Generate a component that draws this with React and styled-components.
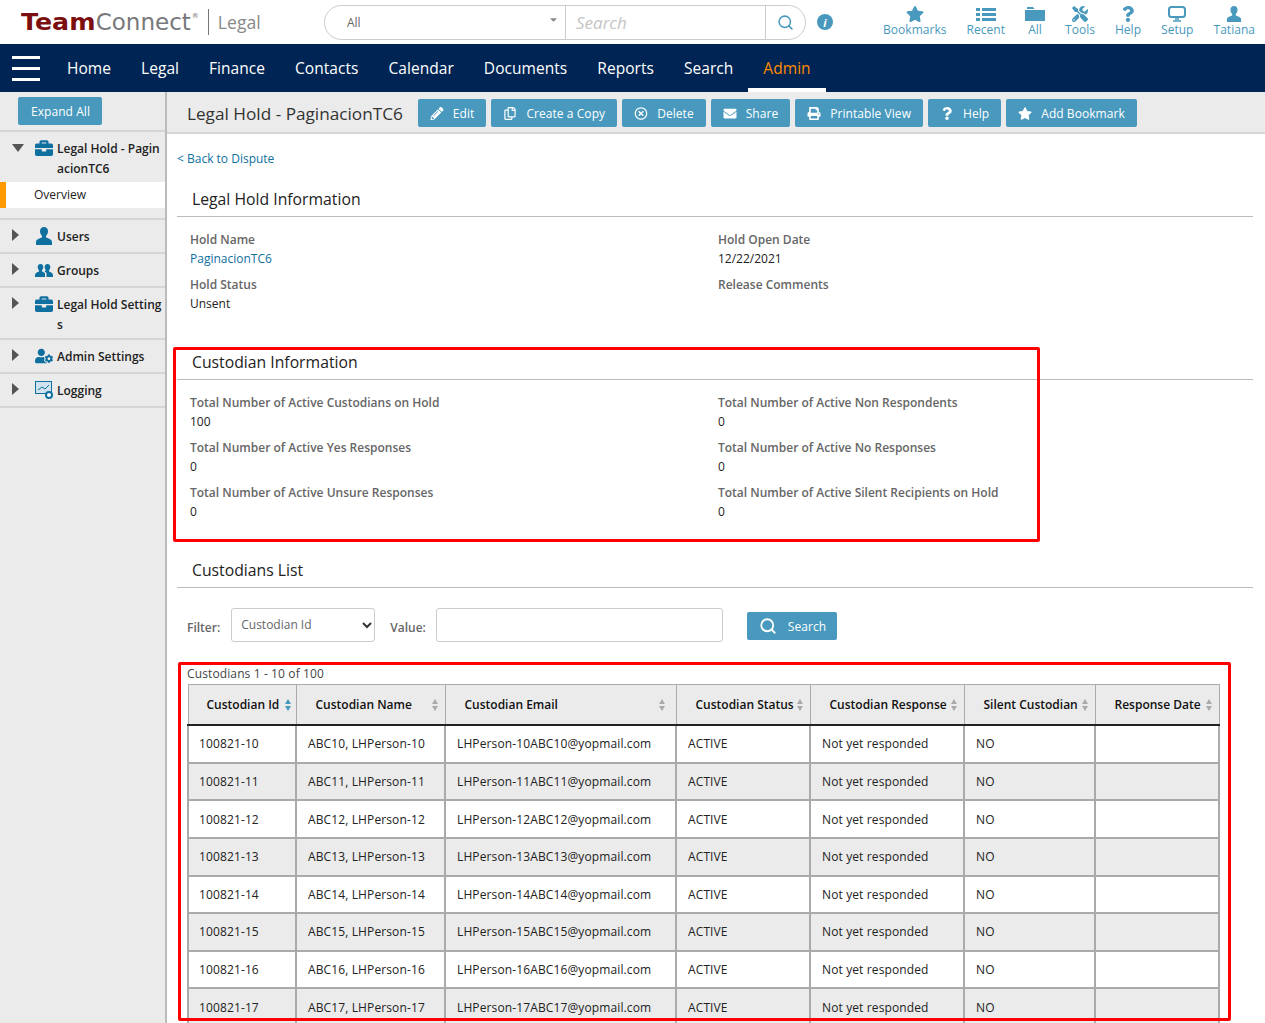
import React from "react";
import styled, { createGlobalStyle } from "styled-components";
import {
  FaStar,
  FaTools,
  FaQuestion,
  FaPencilAlt,
  FaRegCopy,
  FaRegTimesCircle,
  FaEnvelope,
  FaPrint,
  FaBriefcase,
  FaUserCog,
  FaCaretDown,
} from "react-icons/fa";
import { Search as SearchGlyph } from "lucide-react";

const BLUE = "#4899bd";
const ICON_BLUE = "#0f6f9f";
const NAVY = "#002554";

const GlobalStyle = createGlobalStyle`
  html, body {
    margin: 0;
    padding: 0;
    height: 100%;
    overflow: hidden;
    background: #fff;
    font-family: "Open Sans", "Noto Sans", sans-serif;
    font-size: 12px;
    color: #222;
  }
`;

const Page = styled.div`
  position: relative;
  width: 1265px;
  height: 1023px;
  overflow: hidden;
`;

const Header = styled.header`
  display: flex;
  align-items: center;
  height: 44px;
  padding-left: 21px;
  background: #fff;
`;

const Logo = styled.div`
  display: flex;
  align-items: center;
  width: 303px;
  flex: none;
`;

const LogoWord = styled.span`
  font-family: "DejaVu Sans", sans-serif;
  font-size: 23px;
  color: #77787b;
  font-weight: 400;
  b {
    display: inline-block;
    margin-right: 7px;
    color: #7b0f0f;
    font-weight: 700;
    transform: scaleX(1.1);
    transform-origin: left center;
  }
  sup {
    font-size: 7px;
    vertical-align: 12px;
    line-height: 0;
    margin-left: 1px;
  }
`;

const LogoLabel = styled.span`
  margin-left: 9px;
  padding-left: 9px;
  border-left: 1px solid #777;
  height: 26px;
  line-height: 26px;
  font-size: 17.6px;
  color: #888;
`;

const SearchBox = styled.div`
  display: flex;
  width: 482px;
  height: 35px;
  box-sizing: border-box;
  border: 1px solid #ccc;
  border-radius: 18px;
  flex: none;
  margin-top: 1px;
`;

const ScopeSelect = styled.div`
  position: relative;
  display: flex;
  align-items: center;
  width: 241px;
  padding-left: 22px;
  box-sizing: border-box;
  color: #666;
  border-right: 1px solid #ccc;
  svg {
    position: absolute;
    right: 6px;
    top: 8px;
    color: #888;
    font-size: 11px;
  }
`;

const SearchField = styled.div`
  display: flex;
  align-items: center;
  width: 200px;
  padding-left: 10px;
  box-sizing: border-box;
  font-size: 17px;
  font-style: italic;
  color: #c4c4c4;
  border-right: 1px solid #ccc;
`;

const SearchIconCell = styled.div`
  flex: 1;
  display: flex;
  align-items: center;
  padding-left: 11px;
  color: ${BLUE};
`;

const InfoDot = styled.div`
  display: flex;
  align-items: center;
  justify-content: center;
  width: 16px;
  height: 16px;
  margin-left: 11px;
  border-radius: 50%;
  background: ${BLUE};
  color: #fff;
  font-size: 11px;
  font-weight: 700;
  font-style: italic;
`;

const QuickLinks = styled.nav`
  display: flex;
  align-self: flex-start;
  margin-left: auto;
  padding: 6px 10px 0 0;
  gap: 20px;
`;

const QuickLink = styled.div`
  display: flex;
  flex-direction: column;
  align-items: center;
  color: ${BLUE};
  line-height: 15px;
  letter-spacing: 0.03px;
  svg {
    width: 20px;
    height: 16px;
  }
`;

const NavBar = styled.nav`
  display: flex;
  align-items: center;
  height: 48px;
  background: ${NAVY};
`;

const Burger = styled.div`
  display: flex;
  flex-direction: column;
  justify-content: space-between;
  width: 28px;
  height: 25px;
  margin-left: 12px;
  margin-right: 12px;
  span {
    height: 3px;
    background: #fff;
  }
`;

const NavItem = styled.div`
  position: relative;
  display: flex;
  align-items: center;
  height: 100%;
  padding: 0 15px;
  font-size: 15.5px;
  letter-spacing: 0.05px;
  color: ${(p) => (p.$active ? "#ff8a00" : "#fff")};
  &::after {
    content: "";
    display: ${(p) => (p.$active ? "block" : "none")};
    position: absolute;
    left: 0;
    right: 0;
    bottom: 0;
    height: 4px;
    background: #fff;
  }
`;

const Body = styled.div`
  display: flex;
  height: 931px;
`;

const Sidebar = styled.aside`
  width: 165px;
  flex: none;
  background: #ebebeb;
  border-right: 2px solid #bbb;
`;

const ExpandRow = styled.div`
  height: 40px;
  padding: 5px 0 0 18px;
  box-sizing: border-box;
  border-bottom: 2px solid #d6d6d6;
`;

const SmallButton = styled.button`
  display: inline-flex;
  align-items: center;
  height: 28px;
  padding: 0 12px 0 ${(p) => p.$pad || 12}px;
  border: 0;
  border-radius: 2px;
  background: ${BLUE};
  color: #fff;
  font-family: inherit;
  font-size: 12px;
  letter-spacing: 0.06px;
  svg {
    width: 14px;
    height: 13px;
    margin-right: 9px;
  }
`;

const TreeItem = styled.div`
  display: grid;
  grid-template-columns: 35px 22px 1fr;
  padding: 7px 0 ${(p) => (p.$wrapped ? 3 : 5)}px;
  border-bottom: 2px solid #d6d6d6;
  font-weight: 600;
  line-height: 20px;
  color: #222;
`;

const TreeArrow = styled.svg`
  margin: ${(p) => p.$top}px 0 0 12px;
  fill: #555;
`;

const TreeIcon = styled.div`
  color: ${ICON_BLUE};
  line-height: 20px;
  svg {
    width: 18px;
    height: 18px;
    vertical-align: top;
  }
`;

const TreeLabel = styled.div`
  word-break: break-all;
`;

const OpenGroup = styled.div`
  border-bottom: 2px solid #d6d6d6;
  padding-bottom: 10px;
`;

const OpenHead = styled(TreeItem)`
  border-bottom: 0;
  padding: 7px 0 3px;
`;

const OverviewRow = styled.div`
  height: 26px;
  line-height: 26px;
  padding-left: 28px;
  background: #fff;
  border-left: 6px solid #ff9a00;
`;

const Main = styled.main`
  flex: 1;
  min-width: 0;
`;

const Toolbar = styled.div`
  display: flex;
  align-items: center;
  height: 42px;
  box-sizing: border-box;
  padding: 0 0 0 20px;
  background: #ebebeb;
  border-bottom: 2px solid #d6d6d6;
`;

const PageTitle = styled.h1`
  margin: 2px 15px 0 0;
  font-size: 17.2px;
  font-weight: 400;
  color: #333;
`;

const ToolGroup = styled.div`
  display: flex;
  gap: 5px;
  margin-top: 2px;
`;

const Content = styled.div`
  position: relative;
  padding: 16px 12px 0 10px;
`;

const BackLink = styled.a`
  display: block;
  color: ${ICON_BLUE};
  line-height: 17px;
`;

const SectionTitle = styled.h2`
  margin: ${(p) => p.$top}px 0 0;
  padding: 0 0 5px 15px;
  font-size: 15.75px;
  font-weight: 400;
  line-height: 24px;
  color: #222;
  border-bottom: 1px solid #bbb;
`;

const InfoGrid = styled.dl`
  display: grid;
  grid-template-columns: 528px 1fr;
  margin: 14px 0 0 13px;
`;

const Field = styled.div`
  height: 45.3px;
`;

const FieldLabel = styled.dt`
  font-weight: 600;
  color: #666;
  line-height: 18px;
`;

const FieldValue = styled.dd`
  margin: 1px 0 0;
  line-height: 18px;
  color: ${(p) => (p.$link ? ICON_BLUE : "#222")};
`;

const FilterRow = styled.div`
  display: flex;
  align-items: center;
  height: 34px;
  margin: 20px 0 0 10px;
`;

const FilterLabel = styled.label`
  font-weight: 600;
  color: #666;
  margin: 4px ${(p) => p.$after}px 0 0;
`;

const FilterSelect = styled.div`
  position: relative;
  width: 144px;
  height: 34px;
  box-sizing: border-box;
  margin-right: 15px;
  padding: 8px 9px;
  border: 1px solid #ccc;
  border-radius: 3px;
  color: #666;
  line-height: 16px;
`;

const Chevron = styled.svg`
  position: absolute;
  right: 2px;
  top: 13px;
`;

const FilterInput = styled.div`
  width: 287px;
  height: 34px;
  box-sizing: border-box;
  margin-right: 24px;
  border: 1px solid #ccc;
  border-radius: 3px;
`;

const FilterButton = styled(SmallButton)`
  margin-top: 2px;
  padding: 0 11px 0 12px;
  svg {
    width: 18px;
    height: 18px;
    margin-right: 11px;
  }
`;

const ListCaption = styled.div`
  margin: 22px 0 0 10px;
  line-height: 20px;
  letter-spacing: 0.12px;
  color: #444;
`;

const Table = styled.table`
  width: 1032px;
  margin-left: 10px;
  border-collapse: collapse;
  table-layout: fixed;
  font-size: 12px;
`;

const SortMark = styled.svg`
  position: absolute;
  right: 7px;
  top: 14px;
`;

const HeadCell = styled.th`
  position: relative;
  height: 38.4px;
  padding: 0 0 0 19px;
  text-align: left;
  font-weight: 600;
  color: #111;
  background: #ebebeb;
  border: 1px solid #aaa;
  border-bottom: 2px solid #222;
  &:first-child {
    padding-left: 18px;
  }
  &:first-child ${SortMark} {
    right: 5px;
  }
  &:nth-child(3) ${SortMark} {
    right: 11px;
  }
`;

const BodyRow = styled.tr`
  background: ${(p) => (p.$alt ? "#ebebeb" : "#fff")};
`;

const BodyCell = styled.td`
  height: 35.67px;
  padding: 0 0 0 11px;
  color: #222;
  letter-spacing: 0.12px;
  border: 2px solid #aaa;
  white-space: nowrap;
  &:first-child {
    padding-left: 10px;
  }
`;

const RedFrame = styled.div`
  position: absolute;
  left: ${(p) => p.$x}px;
  top: ${(p) => p.$y}px;
  width: ${(p) => p.$w}px;
  height: ${(p) => p.$h}px;
  box-sizing: border-box;
  border: 3px solid #f00;
  border-radius: 2px;
  pointer-events: none;
`;

const RecentIcon = () => (
  <svg viewBox="0 0 20 16" fill="currentColor">
    <rect x="0" y="2" width="4" height="3" />
    <rect x="6" y="2" width="14" height="3" />
    <rect x="0" y="7" width="4" height="3" />
    <rect x="6" y="7" width="14" height="3" />
    <rect x="0" y="12" width="4" height="3" />
    <rect x="6" y="12" width="14" height="3" />
  </svg>
);

const FolderIcon = () => (
  <svg viewBox="0 0 20 16" fill="currentColor">
    <path d="M2 1h6l1.5 2H2z" />
    <path d="M0 4h20v11H0z" />
  </svg>
);

const MonitorIcon = () => (
  <svg viewBox="0 0 20 16" fill="none" stroke="currentColor">
    <rect x="2" y="1" width="16" height="10" rx="2.5" strokeWidth="2" />
    <path d="M8 13h4M6 15h8" strokeWidth="1.6" />
  </svg>
);

const PersonIcon = () => (
  <svg viewBox="0 0 18 18" fill="currentColor">
    <path d="M9 0c2.5 0 4 1.8 4 4.2 0 2-1 3.6-2 4.8v1.6c2.6.9 6 1.9 6 4.4V18H1v-3c0-2.5 3.4-3.5 6-4.4V9C6 7.800 5 6.200 5 4.200 5 1.800 6.500 0 9 0z" />
  </svg>
);

const GroupIcon = () => (
  <svg viewBox="0 0 18 18" fill="currentColor">
    <path d="M5.500 3c1.700 0 2.800 1.300 2.800 3 0 1.400-.6 2.500-1.300 3.300v1.200c1.300.5 2.300 1 3 1.800V16H0v-2c0-1.700 2.400-2.700 4-3.400V9.300C3.300 8.500 2.700 7.400 2.700 6c0-1.700 1.100-3 2.800-3z" />
    <path d="M12.500 3c1.700 0 2.800 1.300 2.800 3 0 1.400-.6 2.500-1.300 3.300v1.300c1.600.7 4 1.700 4 3.400v2h-6.500v-4c-.6-.7-1.300-1.200-2-1.600.4-.6 1-.9 1.500-1.200V9.300C10.300 8.500 9.700 7.400 9.700 6c0-1.700 1.100-3 2.800-3z" />
  </svg>
);

const LoggingIcon = () => (
  <svg viewBox="0 0 18 18">
    <rect x="0.5" y="0.5" width="16" height="12" fill="#cfe3ee" stroke={ICON_BLUE} />
    <path d="M3 9l4-3 3 2 4-4" stroke={ICON_BLUE} fill="none" />
    <circle cx="14" cy="14" r="3" fill="#fff" stroke={ICON_BLUE} strokeWidth="2" />
  </svg>
);

const SortArrows = ({ sorted }) => (
  <SortMark width="6" height="12" viewBox="0 0 6 12">
    <path d="M0 5L3 0L6 5z" fill={sorted ? BLUE : "#aaa"} />
    <path d="M0 7L6 7L3 12z" fill={sorted ? BLUE : "#aaa"} />
  </SortMark>
);

const quickLinks = [
  ["Bookmarks", <FaStar key="b" />],
  ["Recent", <RecentIcon key="r" />],
  ["All", <FolderIcon key="a" />],
  ["Tools", <FaTools key="t" />],
  ["Help", <FaQuestion key="h" />],
  ["Setup", <MonitorIcon key="s" />],
  ["Tatiana", <PersonIcon key="p" />],
];

const navItems = ["Home", "Legal", "Finance", "Contacts", "Calendar", "Documents", "Reports", "Search"];

const tools = [
  ["Edit", FaPencilAlt],
  ["Create a Copy", FaRegCopy],
  ["Delete", FaRegTimesCircle],
  ["Share", FaEnvelope],
  ["Printable View", FaPrint],
  ["Help", FaQuestion],
  ["Add Bookmark", FaStar],
];

const treeItems = [
  ["Users", <PersonIcon key="u" />],
  ["Groups", <GroupIcon key="g" />],
  ["Legal Hold Settings", <FaBriefcase key="s" />, true],
  ["Admin Settings", <FaUserCog key="a" />],
  ["Logging", <LoggingIcon key="l" />],
];

const columns = [
  ["Custodian Id", 108],
  ["Custodian Name", 149],
  ["Custodian Email", 231],
  ["Custodian Status", 134],
  ["Custodian Response", 154],
  ["Silent Custodian", 131],
  ["Response Date", 124],
];

const rows = [10, 11, 12, 13, 14, 15, 16, 17];

const custodianFields = [
  ["Total Number of Active Custodians on Hold", "100"],
  ["Total Number of Active Non Respondents", "0"],
  ["Total Number of Active Yes Responses", "0"],
  ["Total Number of Active No Responses", "0"],
  ["Total Number of Active Unsure Responses", "0"],
  ["Total Number of Active Silent Recipients on Hold", "0"],
];

const App = () => {
  return (
    <Page>
      <GlobalStyle />
      <Header>
        <Logo>
          <LogoWord>
            <b>Team</b>Connect<sup>®</sup>
          </LogoWord>
          <LogoLabel>Legal</LogoLabel>
        </Logo>
        <SearchBox>
          <ScopeSelect>
            All
            <FaCaretDown />
          </ScopeSelect>
          <SearchField>Search</SearchField>
          <SearchIconCell>
            <SearchGlyph size={17} strokeWidth={2.2} />
          </SearchIconCell>
        </SearchBox>
        <InfoDot>i</InfoDot>
        <QuickLinks>
          {quickLinks.map(([label, icon]) => (
            <QuickLink key={label}>
              {icon}
              {label}
            </QuickLink>
          ))}
        </QuickLinks>
      </Header>

      <NavBar>
        <Burger>
          <span />
          <span />
          <span />
        </Burger>
        {navItems.map((item) => (
          <NavItem key={item}>{item}</NavItem>
        ))}
        <NavItem $active>Admin</NavItem>
      </NavBar>

      <Body>
        <Sidebar>
          <ExpandRow>
            <SmallButton $pad={13}>Expand All</SmallButton>
          </ExpandRow>
          <OpenGroup>
            <OpenHead>
              <TreeArrow $top={5} width="12" height="8" viewBox="0 0 12 8">
                <path d="M0 0h12L6 8z" />
              </TreeArrow>
              <TreeIcon>
                <FaBriefcase />
              </TreeIcon>
              <TreeLabel>Legal Hold - PaginacionTC6</TreeLabel>
            </OpenHead>
            <OverviewRow>Overview</OverviewRow>
          </OpenGroup>
          {treeItems.map(([label, icon, wrapped]) => (
            <TreeItem key={label} $wrapped={wrapped}>
              <TreeArrow $top={2} width="7" height="12" viewBox="0 0 7 12">
                <path d="M0 0l7 6-7 6z" />
              </TreeArrow>
              <TreeIcon>{icon}</TreeIcon>
              <TreeLabel>{label}</TreeLabel>
            </TreeItem>
          ))}
        </Sidebar>

        <Main>
          <Toolbar>
            <PageTitle>Legal Hold - PaginacionTC6</PageTitle>
            <ToolGroup>
              {tools.map(([label, Icon]) => (
                <SmallButton key={label}>
                  <Icon />
                  {label}
                </SmallButton>
              ))}
            </ToolGroup>
          </Toolbar>

          <Content>
            <BackLink>&lt; Back to Dispute</BackLink>

            <SectionTitle $top={20}>Legal Hold Information</SectionTitle>
            <InfoGrid>
              <Field>
                <FieldLabel>Hold Name</FieldLabel>
                <FieldValue $link>PaginacionTC6</FieldValue>
              </Field>
              <Field>
                <FieldLabel>Hold Open Date</FieldLabel>
                <FieldValue>12/22/2021</FieldValue>
              </Field>
              <Field>
                <FieldLabel>Hold Status</FieldLabel>
                <FieldValue>Unsent</FieldValue>
              </Field>
              <Field>
                <FieldLabel>Release Comments</FieldLabel>
              </Field>
            </InfoGrid>

            <SectionTitle $top={28}>Custodian Information</SectionTitle>
            <InfoGrid>
              {custodianFields.map(([label, value]) => (
                <Field key={label}>
                  <FieldLabel>{label}</FieldLabel>
                  <FieldValue>{value}</FieldValue>
                </Field>
              ))}
            </InfoGrid>

            <SectionTitle $top={29}>Custodians List</SectionTitle>
            <FilterRow>
              <FilterLabel $after={11}>Filter:</FilterLabel>
              <FilterSelect>
                Custodian Id
                <Chevron width="10" height="7" viewBox="0 0 10 7">
                  <path d="M1 1l4 4 4-4" fill="none" stroke="#333" strokeWidth="2" />
                </Chevron>
              </FilterSelect>
              <FilterLabel $after={10}>Value:</FilterLabel>
              <FilterInput />
              <FilterButton>
                <SearchGlyph strokeWidth={2.4} />
                Search
              </FilterButton>
            </FilterRow>

            <ListCaption>Custodians 1 - 10 of 100</ListCaption>
            <Table>
              <colgroup>
                {columns.map(([label, width]) => (
                  <col key={label} width={width} />
                ))}
              </colgroup>
              <thead>
                <tr>
                  {columns.map(([label], i) => (
                    <HeadCell key={label}>
                      {label}
                      <SortArrows sorted={i === 0} />
                    </HeadCell>
                  ))}
                </tr>
              </thead>
              <tbody>
                {rows.map((n, i) => (
                  <BodyRow key={n} $alt={i % 2 === 1}>
                    <BodyCell>100821-{n}</BodyCell>
                    <BodyCell>ABC{n}, LHPerson-{n}</BodyCell>
                    <BodyCell>LHPerson-{n}ABC{n}@yopmail.com</BodyCell>
                    <BodyCell>ACTIVE</BodyCell>
                    <BodyCell>Not yet responded</BodyCell>
                    <BodyCell>NO</BodyCell>
                    <BodyCell />
                  </BodyRow>
                ))}
              </tbody>
            </Table>
          </Content>
        </Main>
      </Body>

      <RedFrame $x={173} $y={347} $w={867} $h={195} />
      <RedFrame $x={178} $y={662} $w={1053} $h={359} />
    </Page>
  );
};

export default App;
